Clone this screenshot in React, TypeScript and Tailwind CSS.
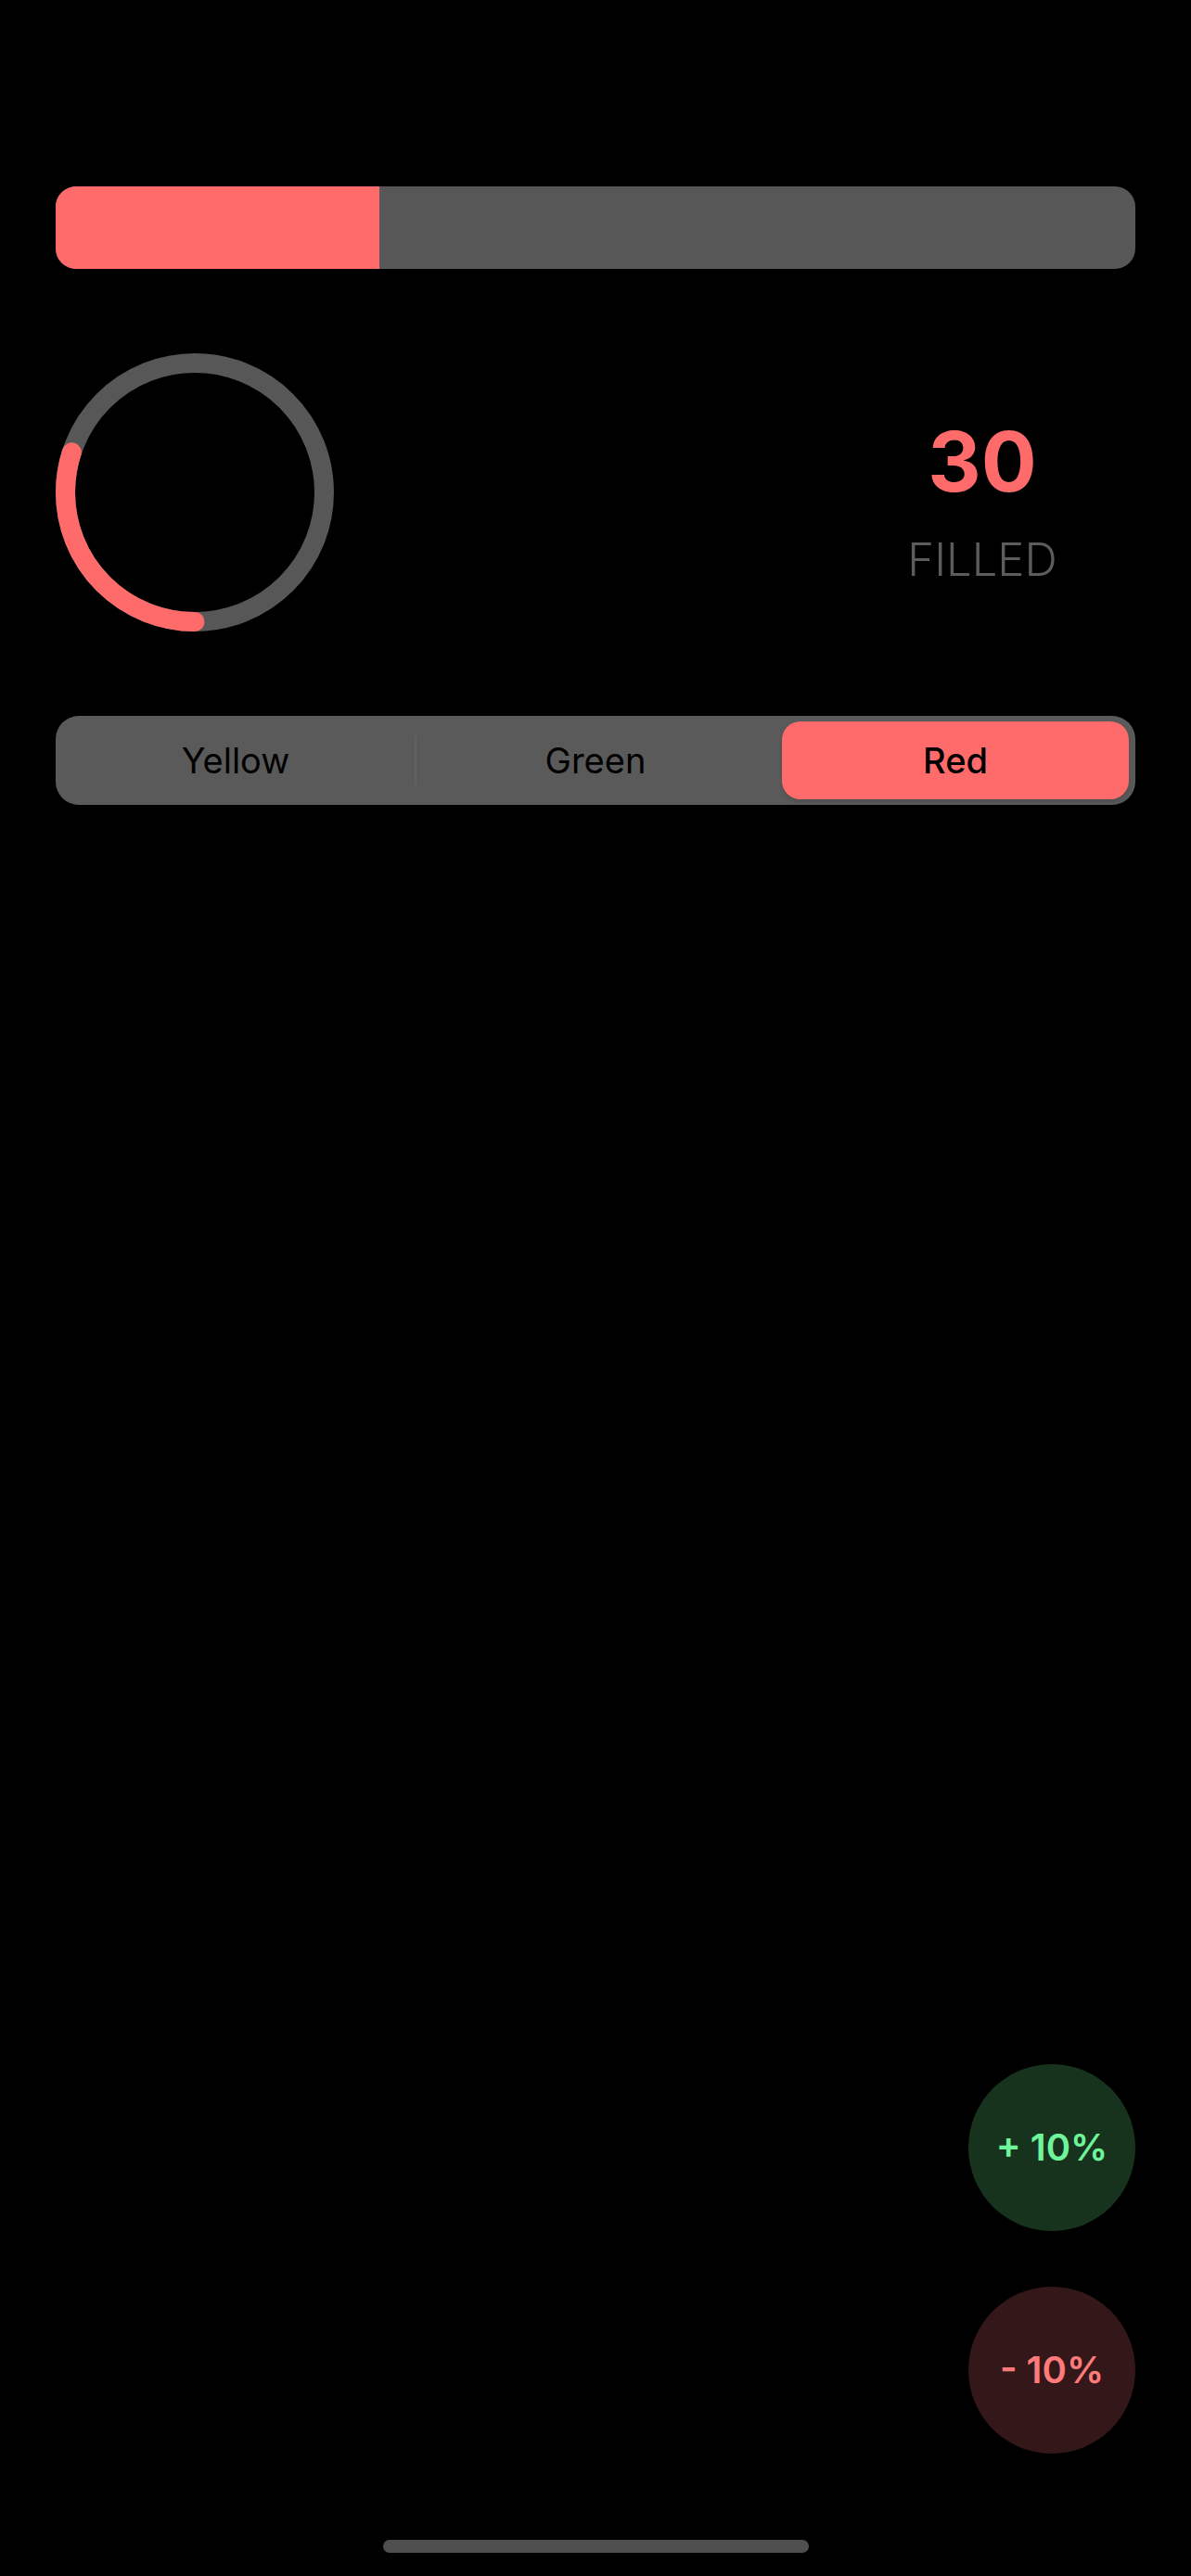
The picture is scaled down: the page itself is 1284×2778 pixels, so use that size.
import React, { useState } from 'react';

type Segment = 'Yellow' | 'Green' | 'Red';

const segments: Segment[] = ['Yellow', 'Green', 'Red'];

// Ring progress, starts at 6 o'clock and runs clockwise
const Ring: React.FC<{ value: number }> = ({ value }) => {
  const r = 139.5;
  const c = 2 * Math.PI * r;
  return (
    <svg width="300" height="300" viewBox="0 0 300 300" className="shrink-0">
      <circle cx="150" cy="150" r={r} fill="none" stroke="#575757" strokeWidth="21" />
      <circle
        cx="150"
        cy="150"
        r={r}
        fill="none"
        stroke="#ff6b6b"
        strokeWidth="21"
        strokeLinecap="round"
        strokeDasharray={`${(c * value) / 100} ${c}`}
        transform="rotate(90 150 150)"
      />
    </svg>
  );
};

export default function App() {
  const [value, setValue] = useState(30);
  const [selected, setSelected] = useState<Segment>('Red');

  return (
    <div
      className="min-h-[2778px] bg-black flex flex-col px-[60px]"
      style={{ fontFamily: 'Inter, "Noto Sans", sans-serif' }}
    >
      {/* Linear progress */}
      <div className="mt-[201px] h-[89px] w-full rounded-[22px] bg-[#575757] overflow-hidden">
        <div className="h-full bg-[#ff6b6b]" style={{ width: `${value}%` }} />
      </div>

      {/* Ring + count */}
      <div className="mt-[91px] flex items-start">
        <Ring value={value} />
        <div className="ml-auto mt-[72px] w-[330px] flex flex-col items-center">
          <span className="text-[89px] leading-none font-bold text-[#ff6b6b]">{value}</span>
          <span className="mt-[37px] text-[49px] leading-none font-light text-[#5c5c5c]">FILLED</span>
        </div>
      </div>

      {/* Segmented control */}
      <div className="mt-[91px] h-[96px] rounded-[25px] bg-[#5a5a5a] grid grid-cols-3">
        {segments.map((s, i) => {
          const active = s === selected;
          const showDivider = i > 0 && !active && segments[i - 1] !== selected;
          return (
            <button
              key={s}
              onClick={() => setSelected(s)}
              className={`relative h-full p-[6px] pl-[7px] pr-[7px] flex ${
                showDivider
                  ? 'before:absolute before:left-[-1px] before:top-[21px] before:h-[54px] before:w-[2px] before:bg-[#626262]'
                  : ''
              }`}
            >
              <span
                className={`flex-1 flex items-center justify-center rounded-[20px] text-[38px] text-black ${
                  active ? 'bg-[#ff6b6b] font-medium shadow-md' : ''
                }`}
              >
                {s}
              </span>
            </button>
          );
        })}
      </div>

      {/* Step buttons */}
      <div className="mt-auto flex flex-col items-end gap-[60px]">
        <button
          onClick={() => setValue(Math.min(100, value + 10))}
          className="w-[180px] h-[180px] rounded-full bg-[#17331e] text-[#6ef59b] text-[40px] font-semibold"
        >
          + 10%
        </button>
        <button
          onClick={() => setValue(Math.max(0, value - 10))}
          className="w-[180px] h-[180px] rounded-full bg-[#341718] text-[#ff7b7b] text-[40px] font-semibold"
        >
          - 10%
        </button>
      </div>

      {/* Home indicator */}
      <div className="mt-[93px] mb-[25px] self-center w-[459px] h-[14px] rounded-full bg-[#4f4f4f]" />
    </div>
  );
}
